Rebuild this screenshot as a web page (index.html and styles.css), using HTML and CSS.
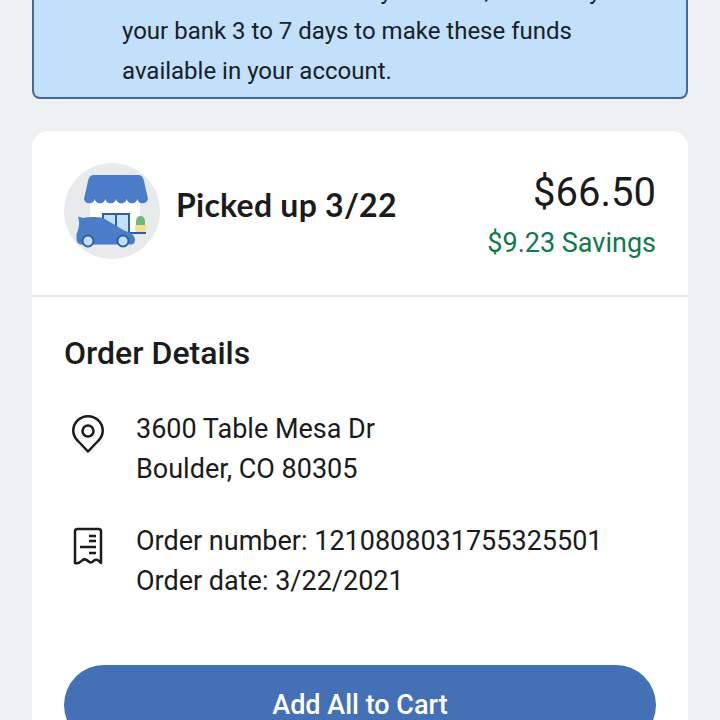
FILE: index.html
```html
<!DOCTYPE html>
<html lang="en">

<head>
  <meta charset="UTF-8" />
  <meta name="viewport" content="width=device-width, initial-scale=1.0" />
  <title>Order details</title>
  <link rel="stylesheet" href="styles.css">
</head>

<body>
  <div class="page">

    <div class="notice">
      <p>Your refund was sent to your bank, but it may take</p>
      <p>your bank 3 to 7 days to make these funds</p>
      <p>available in your account.</p>
    </div>

    <div class="card">
      <div class="summary">
        <div class="summary-icon">
          <svg width="96" height="96" viewBox="0 0 96 96">
            <circle cx="48" cy="48" r="48" fill="#e8eaec" />
            <rect x="26" y="36" width="50" height="34" fill="#fff" />
            <path d="M30 12H74C77.500 12 79 14 80 18L84 36H20L24 18C25 14 26.500 12 30 12Z" fill="#4a7cc7" />
            <path d="M20 35C20 42 30.700 42 30.700 35C30.700 42 41.300 42 41.300 35C41.300 42 52 42 52 35C52 42 62.700 42 62.700 35C62.700 42 73.300 42 73.300 35C73.300 42 84 42 84 35Z" fill="#4a7cc7" />
            <path d="M39 70V51H65V70Z" fill="#c3e0f9" stroke="#2f5f9e" stroke-width="2" />
            <path d="M52 51V70" stroke="#2f5f9e" stroke-width="2" />
            <path d="M71 62H82V66C82 68 80 69 79 69H74C72 69 71 68 71 66Z" fill="#f3e08c" />
            <path d="M72 62V58C72 55 74 53 76.500 53C79 53 81 55 81 58V62Z" fill="#6dbb78" />
            <path d="M64 70H82" stroke="#2f5f9e" stroke-width="2" />
            <path d="M14 53.500L19 55C24 54 32 53.500 37 54.500C41 55.500 56 65 60 67.500C66 69 71 72 71 77C71 80 69 81.500 67 81.500H18C15 81.500 12.500 80 12.500 76V71C15 66 16 60 14 53.500Z" fill="#4a7cc7" />
            <circle cx="24" cy="78" r="5.500" fill="#c3e0f9" stroke="#2f5f9e" stroke-width="2" />
            <circle cx="59" cy="78" r="5.500" fill="#c3e0f9" stroke="#2f5f9e" stroke-width="2" />
          </svg>
        </div>
        <div class="summary-title">Picked up 3/22</div>
        <div class="summary-price">
          <div class="price">$66.50</div>
          <div class="savings">$9.23 Savings</div>
        </div>
      </div>

      <div class="details">
        <h2>Order Details</h2>

        <div class="detail-row">
          <svg class="detail-icon" width="48" height="48" viewBox="0 0 48 48" fill="none" stroke="#1b1b1b" stroke-width="2.500">
            <path d="M24 42.500L13.500 31.500C10.800 28.800 9.300 25.500 9.300 21.800C9.300 13.700 15.900 7.200 24 7.200C32.100 7.200 38.700 13.700 38.700 21.800C38.700 25.500 37.200 28.800 34.500 31.500Z" stroke-linejoin="round" />
            <circle cx="24" cy="22" r="5.500" />
          </svg>
          <div>
            <p>3600 Table Mesa Dr</p>
            <p>Boulder, CO 80305</p>
          </div>
        </div>

        <div class="detail-row">
          <svg class="detail-icon" width="48" height="48" viewBox="0 0 48 48" fill="none" stroke="#1b1b1b" stroke-width="2.500">
            <path d="M11 42V10.500Q11 8 13.500 8H34.500Q37 8 37 10.500V42Q33 37 30 39.500Q27 43 24 40Q21 37 18 39.500Q15 43 11 42Z" stroke-linejoin="round" />
            <path d="M25 15H32M25 20H32M16 26H32M25 32H32" />
          </svg>
          <div>
            <p>Order number: 1210808031755325501</p>
            <p>Order date: 3/22/2021</p>
          </div>
        </div>

        <button class="add-all">Add All to Cart</button>
      </div>
    </div>

  </div>
</body>

</html>
```

FILE: styles.css
```css
html,
body,
div,
p,
h2 {
  margin: 0;
  padding: 0;
}

html,
body {
  height: 720px;
  overflow: hidden;
}

body {
  background: #eef0f2;
  font-family: Roboto, "Liberation Sans", sans-serif;
  color: #1b1b1b;
}

.page {
  padding: 0 32px;
}

.notice {
  margin-top: -43px;
  margin-bottom: 32px;
  padding: 14px 32px 6px 88px;
  background: #c2e0f9;
  border: 2px solid #44699b;
  border-top: 0;
  border-radius: 8px;
  font-size: 24px;
  line-height: 40px;
  color: #17202a;
}

.notice p {
  white-space: nowrap;
}

.card {
  background: #fff;
  border-radius: 16px 16px 0 0;
  height: 600px;
}

.summary {
  display: flex;
  align-items: flex-start;
  padding: 32px;
  height: 166px;
  box-sizing: border-box;
  border-bottom: 2px solid #e1e3e5;
}

.summary-icon {
  width: 96px;
  height: 96px;
  margin-right: 16px;
}

.summary-title {
  flex: 1;
  margin-top: 22px;
  font-family: Lato, sans-serif;
  font-size: 32px;
  line-height: 40px;
  font-weight: 700;
  letter-spacing: 0.25px;
}

.summary-price {
  margin-top: 4px;
  text-align: right;
}

.price {
  font-size: 40px;
  line-height: 52px;
}

.savings {
  margin-top: 5px;
  font-size: 27px;
  line-height: 38px;
  color: #0f7a4b;
}

.details {
  padding: 37px 32px 0;
}

h2 {
  font-size: 32px;
  line-height: 38px;
  font-weight: 500;
  margin-bottom: 37px;
}

.detail-row {
  display: flex;
  font-size: 27px;
  line-height: 40px;
  margin-bottom: 32px;
}

.detail-icon {
  margin-right: 24px;
  flex: none;
}

.add-all {
  display: block;
  width: 100%;
  height: 80px;
  margin-top: 64px;
  border: 0;
  border-radius: 40px;
  background: #4470b6;
  color: #fff;
  font-family: Roboto, "Liberation Sans", sans-serif;
  font-size: 27px;
  font-weight: 500;
}
```
